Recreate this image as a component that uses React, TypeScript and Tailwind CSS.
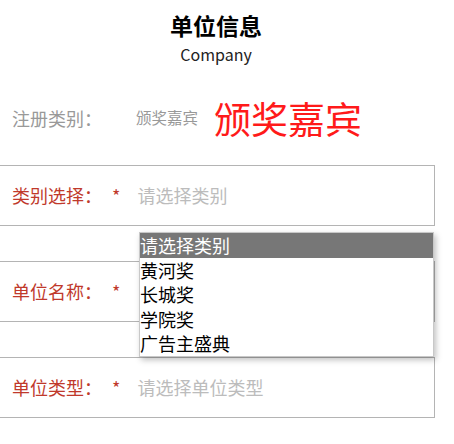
const FONT = { fontFamily: '"Microsoft YaHei", "Noto Sans CJK SC", "Noto Sans", sans-serif' };

const options = ['请选择类别', '黄河奖', '长城奖', '学院奖', '广告主盛典'];

function Field({ label, placeholder }: { label: string; placeholder: string }) {
  return (
    <div className="flex items-center h-[61px] border-y border-r border-[#b4b4b4] w-[435px] text-[18px]">
      <span className="ml-[12px] text-[#c0392b]">{label}</span>
      <span className="ml-[10px] text-[#c0392b]">*</span>
      <span className="ml-[17px] text-[#bcbcbc]">{placeholder}</span>
    </div>
  );
}

export default function App() {
  return (
    <div className="w-[454px] h-[444px] bg-white overflow-hidden relative" style={FONT}>
      <div className="w-[432px] text-center pt-[9px]">
        <h1 className="text-[23px] font-bold leading-[32px] text-black">单位信息</h1>
        <p className="mt-[3px] text-[16px] leading-[20px] text-[#222]">Company</p>
      </div>

      <div className="flex items-center h-[44px] mt-[32px]">
        <span className="ml-[12px] text-[18px] text-[#999]">注册类别：</span>
        <span className="ml-[34px] text-[15.5px] text-[#999]">颁奖嘉宾</span>
        <span className="ml-[16px] text-[37px] leading-[44px] text-[#ff1a1a]">颁奖嘉宾</span>
      </div>

      <div className="mt-[25px] flex flex-col gap-[35px]">
        <Field label="类别选择：" placeholder="请选择类别" />
        <Field label="单位名称：" placeholder="" />
        <Field label="单位类型：" placeholder="请选择单位类型" />
      </div>

      <ul className="absolute left-[139px] top-[232px] w-[295px] bg-white border border-[#c8c8c8] shadow-[2px_3px_6px_rgba(0,0,0,0.25)] text-[18px] leading-[24.6px]">
        {options.map((o, i) => (
          <li key={o} className={i === 0 ? 'bg-[#777] text-white' : 'text-black'}>
            {o}
          </li>
        ))}
      </ul>
    </div>
  );
}
